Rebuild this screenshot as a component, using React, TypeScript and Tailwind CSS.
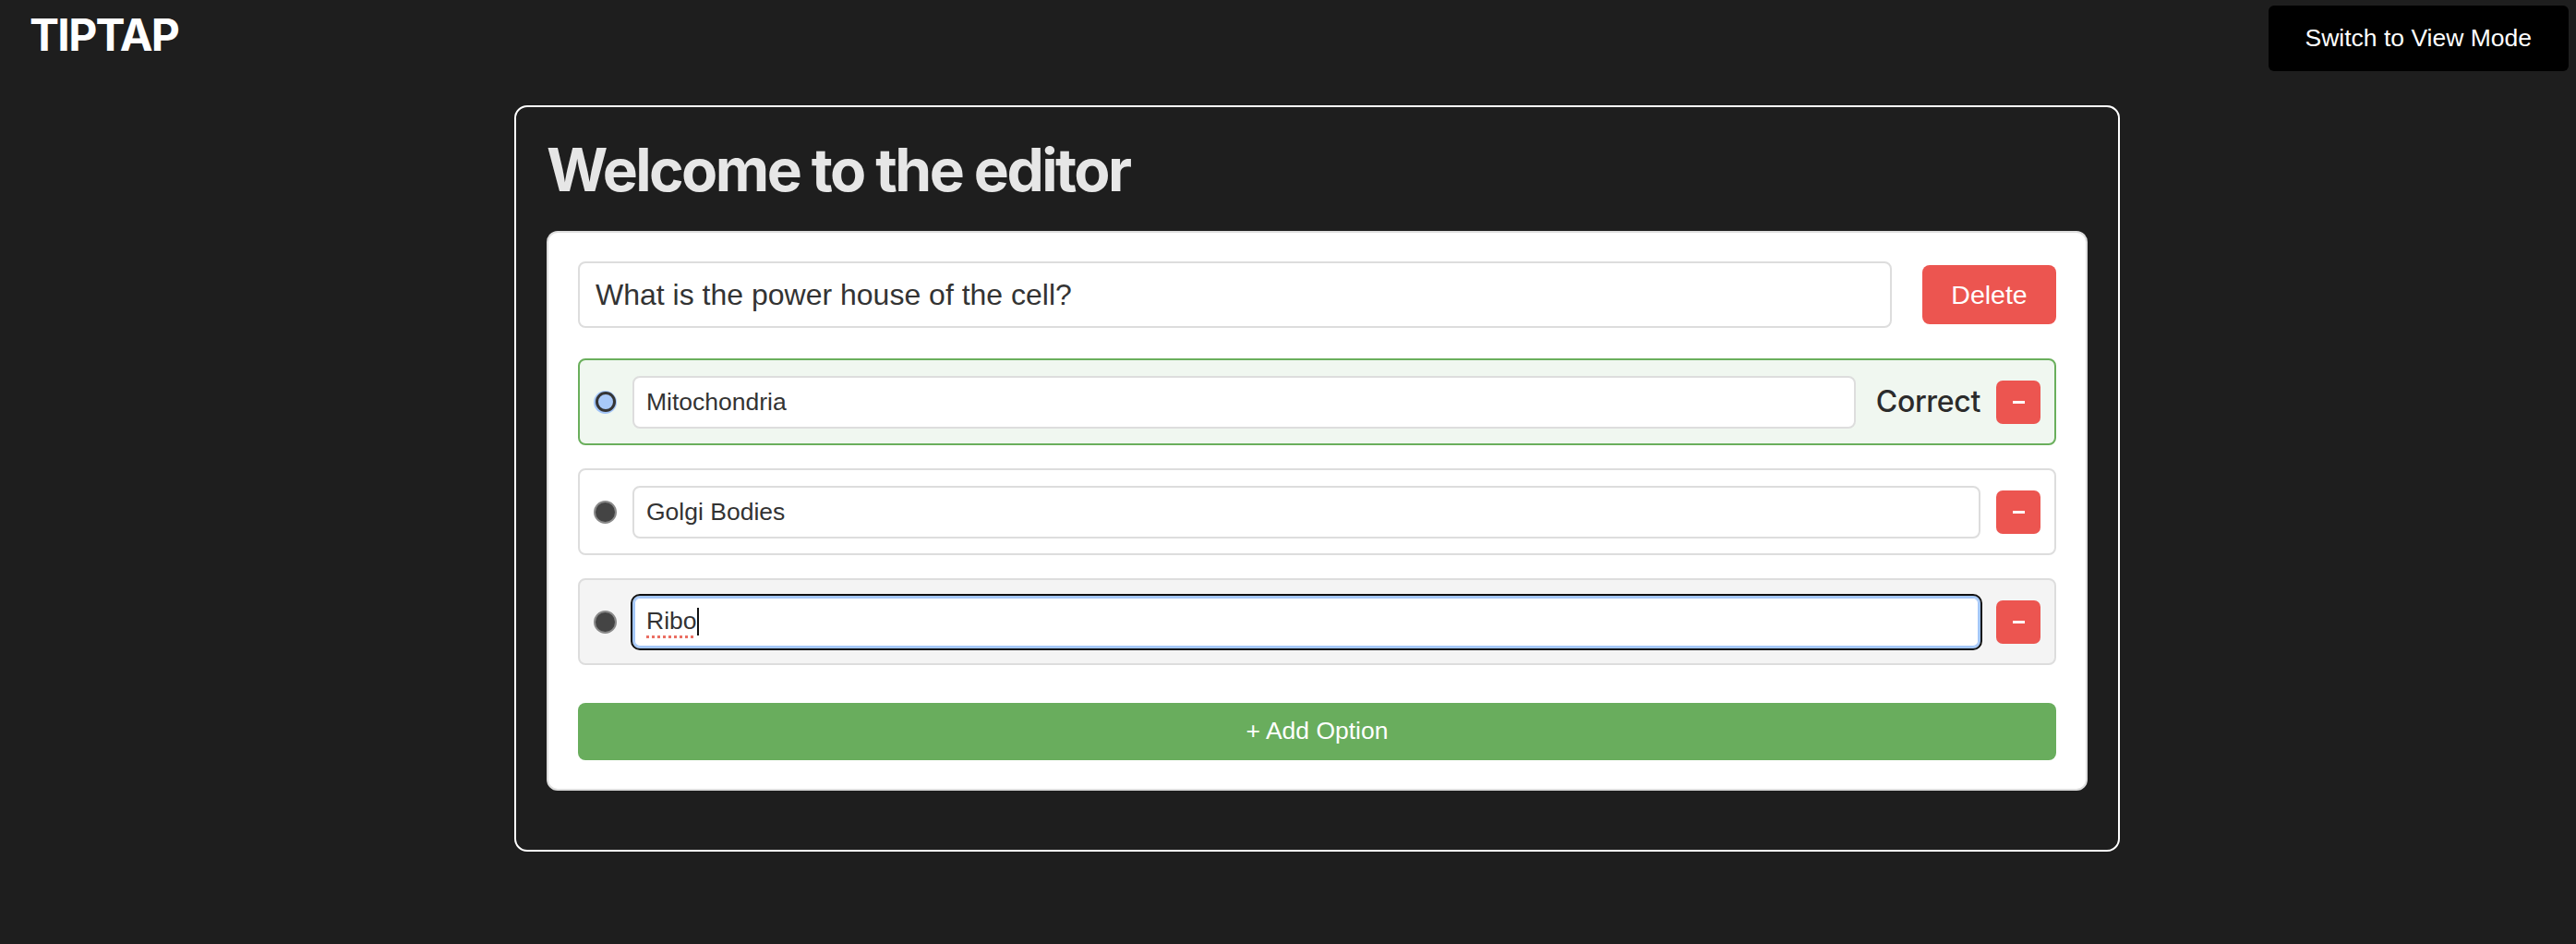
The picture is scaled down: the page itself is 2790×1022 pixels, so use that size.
import React from 'react';

const options = [
  { text: 'Mitochondria', correct: true },
  { text: 'Golgi Bodies', correct: false },
  { text: 'Ribo', correct: false, focused: true },
];

function Radio({ checked }: { checked: boolean }) {
  if (checked) {
    return (
      <span className="w-[25px] h-[25px] shrink-0 rounded-full bg-[#a3c5f8] p-[1.5px]">
        <span className="block w-full h-full rounded-full border-[3px] border-[#353535] bg-[#a8c9f9]" />
      </span>
    );
  }
  return <span className="w-[25px] h-[25px] shrink-0 rounded-full border-2 border-[#8a8a8a] bg-[#444]" />;
}

function MinusButton() {
  return (
    <button className="w-[48px] h-[47px] shrink-0 rounded-[7px] bg-[#ec5550] flex items-center justify-center">
      <span className="block w-[13px] h-[3px] bg-white" />
    </button>
  );
}

export default function App() {
  return (
    <div className="min-h-screen bg-[#1e1e1e] font-['Inter',sans-serif]">
      <header className="flex justify-between items-start">
        <div className="ml-[32px] mt-[9px] text-[48px] leading-[58px] font-bold text-white tracking-[-0.035em]">
          TIPTAP
        </div>
        <button className="mt-[6px] mr-[8px] h-[71px] px-[40px] bg-black rounded-[6px] text-white text-[26.5px] font-['Liberation_Sans',Arial,sans-serif]">
          Switch to View Mode
        </button>
      </header>

      <main className="ml-[557px] mt-[37px] w-[1739px] border-2 border-white rounded-[14px] px-[33px] pt-[29px] pb-[64px]">
        <h1 className="text-[64px] leading-[77px] font-bold text-[#e6e6e6] tracking-[-0.04em] mb-[28px]">
          Welcome to the editor
        </h1>

        <div className="bg-white border-2 border-[#dedede] rounded-[12px] px-[32px] py-[31px] font-['Liberation_Sans',Arial,sans-serif]">
          <div className="flex items-center gap-[33px] mb-[33px]">
            <input
              readOnly
              defaultValue="What is the power house of the cell?"
              className="flex-1 h-[72px] border-2 border-[#dddddd] rounded-[8px] px-[17px] text-[32px] text-[#333] bg-white outline-none"
            />
            <button className="w-[145px] h-[64px] rounded-[8px] bg-[#ec5550] text-white text-[28.5px]">Delete</button>
          </div>

          <div className="flex flex-col gap-[25px]">
            {options.map((o, i) => (
              <div
                key={i}
                className={
                  o.correct
                    ? 'h-[94px] flex items-center gap-[17px] px-[15px] border-2 border-[#6aaf5c] rounded-[8px] bg-[#f0f7f0]'
                    : o.focused
                    ? 'h-[94px] flex items-center gap-[17px] px-[15px] border-2 border-[#dddddd] rounded-[8px] bg-[#f4f4f4]'
                    : 'h-[94px] flex items-center gap-[17px] px-[15px] border-2 border-[#dddddd] rounded-[8px] bg-white'
                }
              >
                <Radio checked={o.correct} />
                {o.focused ? (
                  <div className="flex-1 h-[57px] flex items-center border-2 border-[#a4c7f8] shadow-[inset_0_0_0_1px_#a4c7f8] outline-2 outline-[#111] rounded-[8px] px-[13px] text-[26.5px] text-[#333] bg-white">
                    <span className="underline decoration-dotted decoration-[#ea6f63] decoration-[3px] underline-offset-[7px]">
                      {o.text}
                    </span>
                    <span className="w-[2px] h-[30px] bg-[#111]" />
                  </div>
                ) : (
                  <input
                    readOnly
                    defaultValue={o.text}
                    className="flex-1 min-w-0 h-[57px] border-2 border-[#dddddd] rounded-[8px] px-[13px] text-[26.5px] text-[#333] bg-white outline-none"
                  />
                )}
                {o.correct && (
                  <span className="ml-[5px] text-[32px] font-medium text-[#2b2b2b] tracking-[-0.01em] font-['Inter',sans-serif]">
                    Correct
                  </span>
                )}
                <MinusButton />
              </div>
            ))}
          </div>

          <button className="mt-[41px] w-full h-[62px] rounded-[8px] bg-[#69ad5d] text-white text-[26.5px]">
            + Add Option
          </button>
        </div>
      </main>
    </div>
  );
}
